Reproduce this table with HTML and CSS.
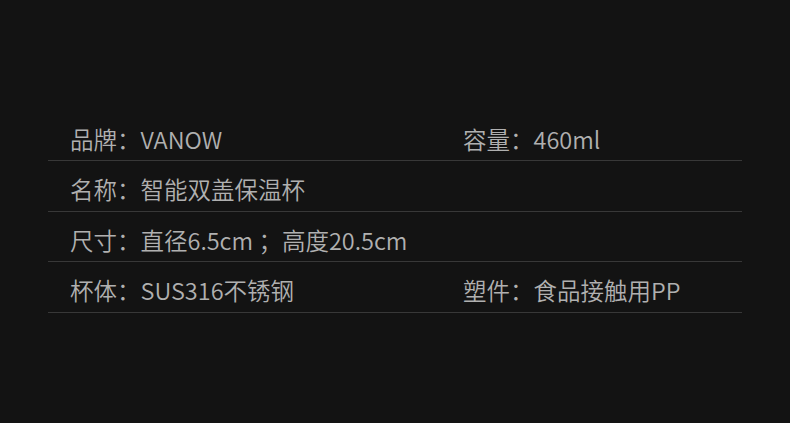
FILE: index.html
```html
<!DOCTYPE html>
<html lang="zh-CN">
<head>
  <meta charset="UTF-8">
  <title>产品参数</title>
  <link rel="stylesheet" href="styles.css">
</head>
<body>
  <div class="spec-table">
    <div class="spec-row">
      <div class="spec-cell">品牌：VANOW</div>
      <div class="spec-cell">容量：460ml</div>
    </div>
    <div class="spec-row">
      <div class="spec-cell">名称：智能双盖保温杯</div>
      <div class="spec-cell"></div>
    </div>
    <div class="spec-row">
      <div class="spec-cell">尺寸：直径6.5cm ；高度20.5cm</div>
      <div class="spec-cell"></div>
    </div>
    <div class="spec-row">
      <div class="spec-cell">杯体：SUS316不锈钢</div>
      <div class="spec-cell">塑件：食品接触用PP</div>
    </div>
  </div>
</body>
</html>
```
FILE: styles.css
```css
body {
  margin: 0;
  background-color: #131313;
  font-family: "Noto Sans CJK SC", "Noto Sans", sans-serif;
  font-weight: 350;
  color: #b0b0b0;
}
.spec-table {
  width: 694px;
  margin: 0 0 0 48px;
  padding-top: 111px;
}
.spec-row {
  display: grid;
  grid-template-columns: 393px 1fr;
  box-sizing: border-box;
  height: 50.4px;
  padding: 13px 0 0 22px;
  border-bottom: 1.5px solid #383838;
}
.spec-cell {
  font-size: 23.5px;
  line-height: 30px;
  white-space: nowrap;
}
```
